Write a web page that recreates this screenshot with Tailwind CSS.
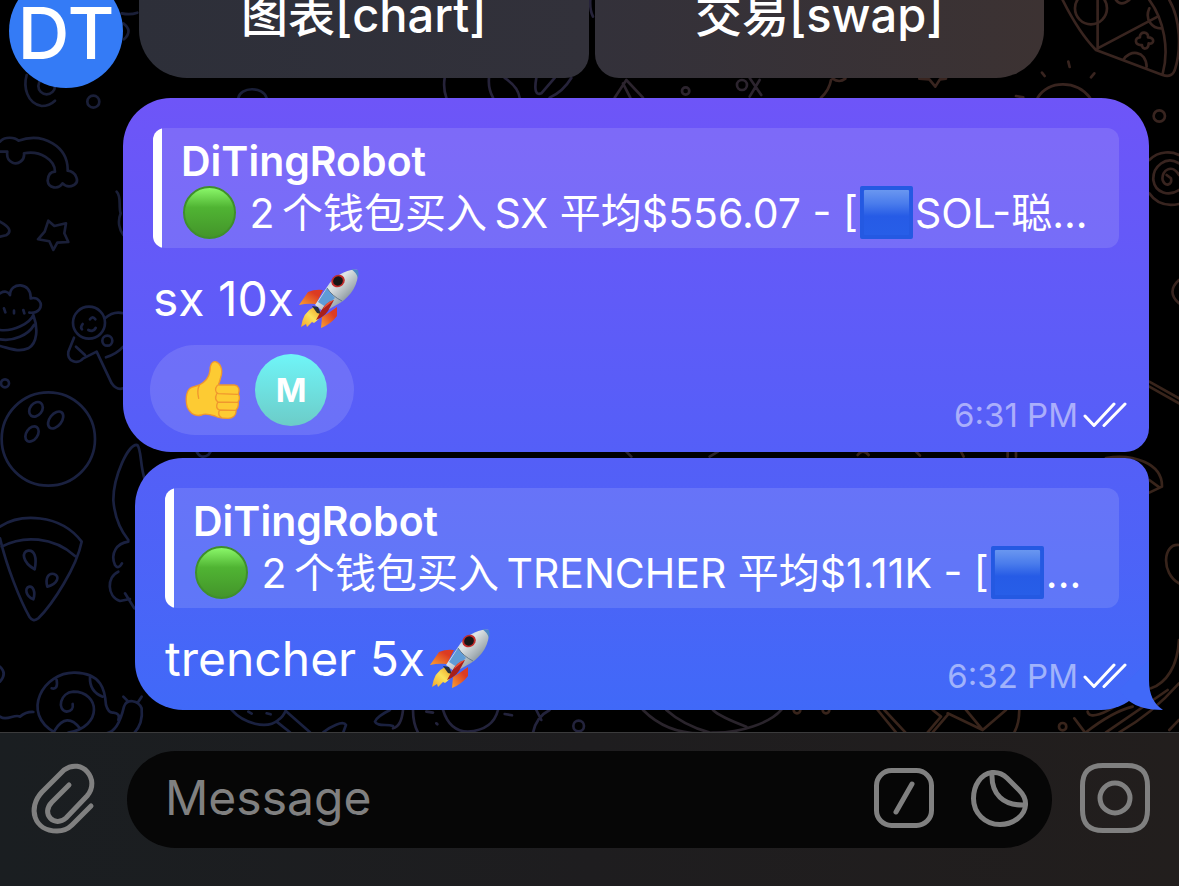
<!DOCTYPE html>
<html lang="zh">
<head>
  <meta charset="UTF-8">
  <meta name="viewport" content="width=device-width, initial-scale=1.0">
  <title>Chat</title>
  <script src="https://cdn.jsdelivr.net/npm/@tailwindcss/browser@4"></script>
</head>
<body class="bg-black text-white font-['Inter','Noto_Sans_CJK_SC',sans-serif]">

  <!-- Shared drawings -->
  <svg class="absolute size-0" aria-hidden="true">
    <defs>
      <linearGradient id="green" x1="0" y1="0" x2="0" y2="1">
        <stop offset="0" stop-color="#8dfb6c"/>
        <stop offset=".4" stop-color="#50b433"/>
        <stop offset="1" stop-color="#43942a"/>
      </linearGradient>
      <linearGradient id="blue" x1="0" y1="0" x2="0" y2="1">
        <stop offset="0" stop-color="#6a97f0"/>
        <stop offset=".3" stop-color="#4a7cec"/>
        <stop offset=".58" stop-color="#265be6"/>
        <stop offset="1" stop-color="#275ee8"/>
      </linearGradient>
      <linearGradient id="hull" x1="0" y1="0" x2="1" y2="1">
        <stop offset=".1" stop-color="#7fb4e0"/>
        <stop offset=".4" stop-color="#dfe4e6"/>
        <stop offset=".62" stop-color="#a9b3b8"/>
        <stop offset="1" stop-color="#3c5060"/>
      </linearGradient>
      <linearGradient id="fin" x1="1" y1="0" x2="0" y2="1">
        <stop offset=".3" stop-color="#dc3b22"/>
        <stop offset="1" stop-color="#fba030"/>
      </linearGradient>
      <linearGradient id="flame" x1="1" y1="0" x2="0" y2="1">
        <stop offset="0" stop-color="#e8931c"/>
        <stop offset=".5" stop-color="#fbe35a"/>
        <stop offset="1" stop-color="#f3a52c"/>
      </linearGradient>
    </defs>
    <symbol id="dot" viewBox="0 0 54 54">
      <circle cx="27" cy="27" r="26" fill="url(#green)" stroke="#3f8f2b" stroke-width="2"/>
    </symbol>
    <symbol id="square" viewBox="0 0 54 54">
      <rect x="0" y="0" width="54" height="54" rx="2" fill="#2459e2"/>
      <rect x="4" y="4" width="46" height="46" rx="1" fill="url(#blue)"/>
    </symbol>
    <symbol id="rocket" viewBox="9 12 62 62">
      <path d="M10 49 19 36Q26 33 34 34L27 48Q18 47 10 49Z" fill="url(#fin)"/>
      <path d="M32 72 33 61Q40 57 48 51L48 60Q42 68 32 72Z" fill="url(#fin)"/>
      <path d="M25 51Q14 56 12 71L17 68 18 71 23 66 25 67Q31 63 33 57Z" fill="url(#flame)"/>
      <path d="M69 14C60 12 45 19 38 31L26 49 35 56 51 47C62 40 70 28 69 14Z" fill="url(#hull)"/>
      <path d="M38 32 29 46 37 51 46 42Z" fill="#5f9bd6"/>
      <path d="M38 32Q43 40 53 45" fill="none" stroke="#64798a" stroke-width="1"/>
      <path d="M62 13Q67 16 69 22Q70 17 69 14Z" fill="#4c86c4"/>
      <path d="M23 50 29 51 32 58 28 57Z" fill="#27313a"/>
      <path d="M45 44Q37 46 32 55L27 64Q35 61 39 55Z" fill="#a81f1b"/>
      <path d="M45 44Q37 46 34 53Z" fill="#ee5439"/>
      <ellipse cx="49" cy="25" rx="7" ry="6" fill="#c02c2c" transform="rotate(-30 49 25)"/>
      <ellipse cx="49" cy="25" rx="5" ry="4.500" fill="#161616" transform="rotate(-30 49 25)"/>
    </symbol>
    <symbol id="checks" viewBox="0 0 44 26">
      <path d="M2 14 11 23.500 31 2M21 23.500 42 2" fill="none" stroke="#fff" stroke-width="3" stroke-linecap="round" stroke-linejoin="round"/>
    </symbol>
  </svg>

  <div class="relative flex h-screen flex-col overflow-hidden">

    <!-- Wallpaper doodles -->
    <svg class="absolute left-0 top-0" width="1179" height="886" fill="none" stroke-width="8" stroke-linecap="round" stroke-linejoin="round" aria-hidden="true">
      <g transform="scale(.3333)" stroke="#1a1f38">
        <path d="M80 225C70 260 80 310 125 318Q148 318 165 302M365 40Q390 46 412 38M370 70Q400 92 372 118"/>
        <circle cx="140" cy="258" r="25"/><circle cx="280" cy="305" r="18"/>
        <path d="M0 425C15 408 45 412 55 422C130 395 205 440 203 512C228 515 240 545 222 555Q202 565 188 550C175 570 145 565 143 542Q145 515 165 515C165 480 120 450 72 460C75 480 55 495 38 488Q18 480 22 455L0 455"/>
        <path d="M145 662 163 678 198 670 193 700 205 726 172 728 160 750 148 724 114 718 134 695Z"/>
        <path d="M0 665Q45 690 18 706L0 710M350 575C365 590 355 620 362 640C352 665 358 690 370 705M715 294C720 260 790 258 800 294"/>
      </g>
      <g transform="translate(0 250) scale(.3333)" stroke="#1a2140">
        <path d="M0 130Q20 118 30 135C30 95 95 95 92 145C115 140 130 160 118 178Q108 190 88 188M0 240C40 245 90 220 100 195C115 235 112 280 85 295C55 308 30 295 0 288M0 268C40 275 85 255 102 225M12 175l4 12M42 182v8M70 180l3 10"/>
        <circle cx="267" cy="218" r="48"/>
        <path d="M248 222q-8 10-2 16M270 208q8-12 16 0M265 240q14 8 22-6M222 263 205 305C200 335 235 345 250 325L290 305 335 400Q350 422 370 415M315 205Q340 182 370 190M370 290Q350 312 318 322M228 290 255 315"/>
        <circle cx="322" cy="272" r="15"/><circle cx="15" cy="400" r="12"/>
        <circle cx="145" cy="567" r="140"/>
        <ellipse cx="108" cy="478" rx="18" ry="24" transform="rotate(38 108 478)"/>
        <ellipse cx="167" cy="510" rx="18" ry="29" transform="rotate(38 167 510)"/>
        <ellipse cx="96" cy="552" rx="17" ry="25" transform="rotate(35 96 552)"/>
        <path d="M435 690C420 650 425 600 412 585C385 580 340 680 340 750Q345 820 385 870M590 605q12 24 35 10l10-15"/>
      </g>
      <g transform="translate(0 450) scale(.3333)" stroke="#1a2140">
        <path d="M385 275C350 280 330 310 345 345Q355 360 366 340M355 365C320 380 320 440 360 453L390 447M375 430 403 475"/>
        <path d="M0 230C60 190 180 190 245 275C230 350 160 460 115 505Q100 518 88 500C60 450 20 350 0 265M5 290C70 255 160 260 225 318"/>
        <path d="M104 358C112 320 102 300 85 302C65 304 65 335 104 358ZM142 410C135 385 145 368 162 372C182 378 172 402 142 410ZM100 448C108 425 98 408 88 410C72 414 78 440 100 448Z"/>
        <path d="M0 650Q22 670 0 695M0 800C20 815 45 790 60 800Q78 785 100 786"/>
        <path d="M165 848C60 790 130 665 225 668C305 670 315 720 318 765Q325 790 340 788Q362 790 355 810M205 848C310 830 300 725 220 725C180 728 170 780 200 785Q222 782 218 762M155 715Q175 720 170 690M270 682Q268 725 308 740M165 840Q200 785 240 835M320 850C350 845 365 800 372 770C380 745 415 750 425 775Q430 820 402 850M370 740l15 15M425 740l-12 18"/>
        <path d="M695 780C730 820 800 840 835 810Q850 800 858 780M830 815 870 847M860 785 930 847M970 847C990 830 1030 810 1038 825L1030 847M1170 780Q1130 800 1125 815C1130 830 1160 822 1179 828M745 785l10 6M800 790l12 3"/>
      </g>
      <g transform="translate(393 0) scale(.3333)" stroke="#26233a">
        <path d="M155 234Q150 265 160 293M288 234Q285 265 300 293M335 234Q375 260 380 293M430 234Q420 290 445 280L485 234M535 234Q510 275 470 293M592 0Q590 30 600 50"/>
        <path d="M665 293 700 240 750 293M690 250 712 293M1070 234 1105 285M1100 240 1070 290" stroke="#2c242e"/>
        <circle cx="878" cy="273" r="11" stroke="#2c242e"/><circle cx="1047" cy="255" r="15" stroke="#2c242e"/>
      </g>
      <g transform="translate(393 450) scale(.3333)" stroke="#23233c">
        <path d="M0 835Q25 830 30 780M60 780Q60 820 75 848M150 780Q170 845 225 845Q300 840 315 780M470 780Q430 800 420 848M100 785l20 3M335 792l22 4M130 820l3 3M430 780l15 30"/>
        <circle cx="557" cy="828" r="16"/>
        <path d="M750 780C820 850 900 855 960 848C1040 850 1130 820 1165 780M820 780Q870 825 950 848M1060 830Q980 800 960 780M700 5 715 20M950 20 975 5" stroke="#2a242c"/>
      </g>
      <g transform="translate(786 0) scale(.3333)" stroke="#38241f">
        <path d="M830 0C860 60 900 120 930 150L1130 225Q1160 235 1168 205C1185 150 1185 60 1150 0M1090 0C1135 60 1150 150 1130 222M935 0V145L1115 50M1090 25C1075 60 1100 85 1125 85M1012 180C1030 148 1080 150 1082 200M990 0Q1005 20 1030 0"/>
        <circle cx="915" cy="25" r="48"/>
        <path d="M1062 112C1060 92 1090 95 1086 112C1108 112 1105 135 1088 130C1088 150 1068 150 1068 135C1045 138 1045 112 1062 112Z"/>
        <path d="M755 293C790 240 870 240 912 293M768 218l8 10M847 185l4 16M925 220l-10 12M690 288l22 4M400 236 430 238 448 260 462 238 480 236M135 240Q130 270 105 293M140 236Q160 250 178 236"/>
        <circle cx="1120" cy="348" r="17"/>
        <path d="M1090 480C1120 450 1160 455 1179 465M1179 612C1140 620 1110 610 1090 580M1179 490C1140 465 1100 500 1102 540C1108 580 1150 590 1179 570M1179 525C1160 490 1125 510 1130 540C1138 562 1160 555 1155 535L1142 525M1179 840Q1140 875 1179 910"/>
      </g>
      <g transform="translate(786 450) scale(.3333)" stroke="#38241b">
        <path d="M1090-205 1179-155M1090-190 1179-140M960 24C1040 10 1130 40 1128 110L1090 128M1090 90 1120 112M1179 285C1130 280 1125 370 1179 400M1179 570C1175 650 1140 700 1095 715"/>
        <path d="M215 15Q230-5 248 15M390 5l12 12M525 5l8 15M665 5v15M690 5v15"/>
        <path d="M275 780 330 847M295 780 358 847M440 780 465 800 425 847M485 795 440 847M485 790 590 840 660 780M540 780 590 840M700 780Q700 820 685 847M865 805 895 845M905 785C910 810 960 790 1000 760M900 847C960 800 1000 780 1040 770M960 847 1145 720M1000 847Q1100 790 1179 700M1179 810 1150 840"/>
        <circle cx="830" cy="830" r="11"/><circle cx="33" cy="780" r="10"/><circle cx="120" cy="780" r="10"/>
      </g>
    </svg>

    <!-- Messages -->
    <main class="relative flex flex-1 flex-col justify-end overflow-hidden pb-[22px] pr-[30px]">

      <div class="flex items-end pl-[9px] pr-[105px]">
        <div class="mr-4 flex size-[114px] shrink-0 items-center justify-center rounded-full bg-[#347bf6] pt-1 text-[72px] font-medium leading-none">DT</div>
        <div class="mb-[10px] flex flex-1 gap-[6px] text-[47px] font-medium">
          <button class="h-[126px] flex-1 rounded-[24px] rounded-bl-[48px] bg-linear-to-r from-[#2d2f39] to-[#32313a]">图表[chart]</button>
          <button class="h-[126px] flex-1 rounded-[24px] rounded-br-[48px] bg-linear-to-r from-[#33313a] to-[#3c3232]">交易[swap]</button>
        </div>
      </div>

      <article class="ml-[123px] mt-[10px] rounded-[48px] rounded-br-[24px] bg-linear-to-b from-[#6e55f8] to-[#545ff8] pb-[17px] pt-[30px]">
        <blockquote class="mx-[30px] flex h-[120px] overflow-hidden rounded-xl bg-white/12 text-[41px] leading-[50px]">
          <div class="mr-[19px] w-[9px] shrink-0 bg-white"></div>
          <div class="pt-2">
            <p class="font-semibold">DiTingRobot</p>
            <p class="flex items-center whitespace-pre"><svg class="mx-[2px] size-[53px]"><use href="#dot"/></svg> 2&#8201;个钱包买入&#8201;SX 平均$556.07 - [<svg class="mx-[2px] size-[53px]"><use href="#square"/></svg>SOL-聪...</p>
          </div>
        </blockquote>
        <p class="mx-[30px] mt-[18px] flex items-center text-[48px] leading-[66px]">sx 10x<svg class="ml-1 size-[62px]"><use href="#rocket"/></svg></p>
        <footer class="mt-[13px] flex items-end justify-between pl-[27px] pr-[22px]">
          <button class="flex h-[90px] items-center gap-[14px] rounded-full bg-white/12 pl-[35px] pr-[27px]">
            <svg class="h-[60px] w-[56px]" viewBox="555 330 168 180" stroke-linecap="round" stroke-linejoin="round">
              <path d="M598 405C615 395 627 385 630 362C630 345 636 333 646 335C660 338 668 355 664 375Q660 392 655 405L703 405C716 407 720 418 715 432Q722 445 714 456Q718 470 708 480C710 496 698 506 682 505Q655 505 645 498Q615 488 605 495C585 500 570 490 562 472C556 450 557 420 575 412Z" fill="#fdcb33" stroke="#f0972e" stroke-width="4"/>
              <path d="M598 406Q590 420 596 445M652 406C644 415 645 428 655 431L712 433M650 432Q642 448 654 456L713 457M653 457Q645 475 658 480L706 481M658 481Q652 495 664 503" fill="none" stroke="#f0972e" stroke-width="4"/>
            </svg>
            <span class="flex size-[72px] items-center justify-center rounded-full bg-linear-to-b from-[#6ff5f8] to-[#6cccc8] text-[33px] font-bold leading-none">M</span>
          </button>
          <div class="flex items-center gap-[5px] text-[33px] leading-[40px] text-white/50">
            <time>6:31 PM</time><svg class="h-[26px] w-[44px]"><use href="#checks"/></svg>
          </div>
        </footer>
      </article>

      <article class="relative ml-[135px] mt-[6px] rounded-[48px] rounded-tr-[24px] bg-linear-to-b from-[#545ff7] to-[#4069f8] pb-[14px] pt-[30px]">
        <blockquote class="mx-[30px] flex h-[120px] overflow-hidden rounded-xl bg-white/12 text-[41px] leading-[50px]">
          <div class="mr-[19px] w-[9px] shrink-0 bg-white"></div>
          <div class="pt-2">
            <p class="font-semibold">DiTingRobot</p>
            <p class="flex items-center whitespace-pre"><svg class="mx-[2px] size-[53px]"><use href="#dot"/></svg> 2&#8201;个钱包买入&#8201;TRENCHER 平均$1.11K - [<svg class="mx-[2px] size-[53px]"><use href="#square"/></svg>...</p>
          </div>
        </blockquote>
        <div class="mt-[18px] flex items-end justify-between pl-[30px] pr-[22px]">
          <p class="mb-1 flex items-center text-[48px] leading-[66px]">trencher 5x<svg class="ml-1 size-[62px]"><use href="#rocket"/></svg></p>
          <div class="flex items-center gap-[5px] text-[33px] leading-[40px] text-white/50">
            <time>6:32 PM</time><svg class="h-[26px] w-[44px]"><use href="#checks"/></svg>
          </div>
        </div>
        <!-- Tail -->
        <svg class="absolute -right-[14px] bottom-0" width="64" height="60" fill="#4169f8">
          <path d="M50 10V30C50 45 55 54 64 60C49 60 38 57 30 51L20 40Z"/>
        </svg>
      </article>
    </main>

    <!-- Composer -->
    <form class="relative flex h-[154px] items-start border-t border-[#3b3b3c] bg-linear-to-r from-[#1a1e21] via-[#1e1d1f] to-[#221e1d] pl-[30px] pr-7 pt-[18px] text-[#808080]">
      <button type="button" aria-label="Attach" class="mr-[29px] mt-[11px] shrink-0">
        <svg width="68" height="74" viewBox="0 0 68 74" fill="none" stroke="currentColor" stroke-width="5" stroke-linecap="round" stroke-linejoin="round">
          <path d="M39 23 22 40C10 52 25 66 36 56L57 34C71 18 52-5 34 8L12 30C-3 46 4 69 27 69Q36 69 42 63L61 44"/>
        </svg>
      </button>
      <div class="flex h-[97px] min-w-0 flex-1 items-center rounded-full bg-[#060606] pb-[3px] pl-[38px] pr-[22px]">
        <input type="text" aria-label="Message" placeholder="Message" class="min-w-0 flex-1 bg-transparent text-[48px] text-white outline-none placeholder:text-[#808080]">
        <button type="button" aria-label="Commands" class="mr-[34px] shrink-0">
          <svg width="60" height="60" viewBox="0 0 60 60" fill="none" stroke="currentColor" stroke-width="5" stroke-linecap="round">
            <rect x="2.500" y="2.500" width="55" height="55" rx="15"/>
            <path d="M38 16 22 44"/>
          </svg>
        </button>
        <button type="button" aria-label="Stickers" class="shrink-0">
          <svg width="62" height="60" viewBox="0 0 62 60" fill="none" stroke="currentColor" stroke-width="5" stroke-linejoin="round">
            <path d="M24 4.500C13 6 5.500 17 5.500 30.500C5.500 45 17 56.500 32 56.500C46 56.500 57 47 57.500 37C58 30 54 25 51 22L39 10C34 5 29 4 24 4.500Z"/>
            <path d="M24 5C23 26 35 38 57 37"/>
          </svg>
        </button>
      </div>
      <button type="button" aria-label="Camera" class="ml-[27px] mt-[11px] shrink-0">
        <svg width="72" height="72" viewBox="0 0 72 72" fill="none" stroke="currentColor" stroke-width="5">
          <path d="M24 3.500H48C62 3.500 68.500 10 68.500 24V48C68.500 62 62 68.500 48 68.500H24C10 68.500 3.500 62 3.500 48V24C3.500 10 10 3.500 24 3.500Z"/>
          <circle cx="36" cy="36" r="15"/>
        </svg>
      </button>
    </form>
  </div>
</body>
</html>
